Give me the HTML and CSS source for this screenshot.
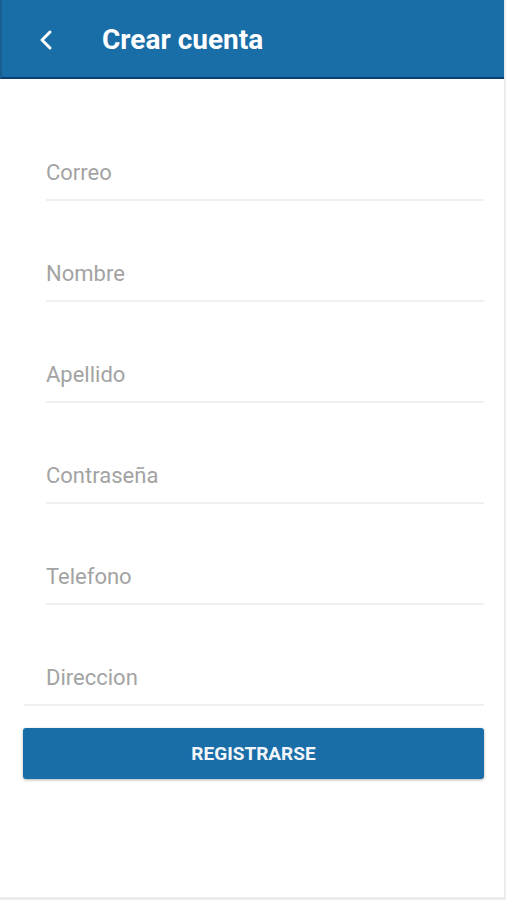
FILE: index.html
```html
<!DOCTYPE html>
<html lang="es">
<head>
    <meta charset="UTF-8">
    <meta name="viewport" content="width=device-width, initial-scale=1.0">
    <title>Crear cuenta</title>
    <link rel="stylesheet" href="styles.css">
</head>
<body>
    <div class="pantalla">
        <header class="barra">
            <button class="volver" aria-label="Volver">
                <svg width="16" height="22" viewBox="0 0 16 22">
                    <path d="M12 3 L4 11 L12 19" fill="none" stroke="#fff" stroke-width="3" stroke-linecap="round" stroke-linejoin="round"/>
                </svg>
            </button>
            <h1>Crear cuenta</h1>
        </header>

        <form class="formulario">
            <div class="campo"><input type="email" placeholder="Correo"></div>
            <div class="campo"><input type="text" placeholder="Nombre"></div>
            <div class="campo"><input type="text" placeholder="Apellido"></div>
            <div class="campo"><input type="password" placeholder="Contraseña"></div>
            <div class="campo"><input type="tel" placeholder="Telefono"></div>
            <div class="campo ancho"><input type="text" placeholder="Direccion"></div>
            <button type="button" class="registrar">REGISTRARSE</button>
        </form>
    </div>
</body>
</html>
```

FILE: styles.css
```css
body {
    margin: 0;
    font-family: Roboto, "Liberation Sans", sans-serif;
    background: #fff;
}
.pantalla {
    width: 504px;
    height: 897px;
    border-right: 2px solid #ececec;
    border-bottom: 3px solid #ececec;
}
.barra {
    height: 79px;
    padding-top: 2px;
    background-color: #1a6ea7;
    border-bottom: 2px solid #0d3f73;
    border-left: 2px solid #175f92;
    display: flex;
    align-items: center;
    box-sizing: border-box;
}
.volver {
    background: none;
    border: none;
    padding: 0;
    margin-left: 36px;
    width: 20px;
    height: 24px;
    display: flex;
    align-items: center;
    cursor: pointer;
}
.barra h1 {
    margin: 0 0 0 44px;
    color: #fff;
    font-size: 28px;
    font-weight: bold;
}
.formulario {
    margin: 0;
    padding: 71px 20px 0 24px;
}
.campo {
    box-sizing: border-box;
    margin-left: 22px;
    border-bottom: 2px solid #f0f0f0;
    height: 51px;
    margin-bottom: 50px;
}
.campo.ancho {
    margin-left: 0;
    padding-left: 22px;
    margin-bottom: 22px;
}
.campo input {
    width: 100%;
    border: none;
    outline: none;
    padding: 0;
    font-family: Roboto, "Liberation Sans", sans-serif;
    font-size: 22px;
    color: #333;
    height: 44px;
}
.campo input::placeholder {
    color: #a3a3a3;
}
.registrar {
    width: 461px;
    height: 51px;
    margin-left: -1px;
    background-color: #1a6ea7;
    color: #f2f6fa;
    border: none;
    border-radius: 3px;
    box-shadow: 0 1px 3px rgba(0, 0, 0, 0.3);
    font-family: Roboto, "Liberation Sans", sans-serif;
    font-size: 19px;
    font-weight: bold;
    cursor: pointer;
}
```
